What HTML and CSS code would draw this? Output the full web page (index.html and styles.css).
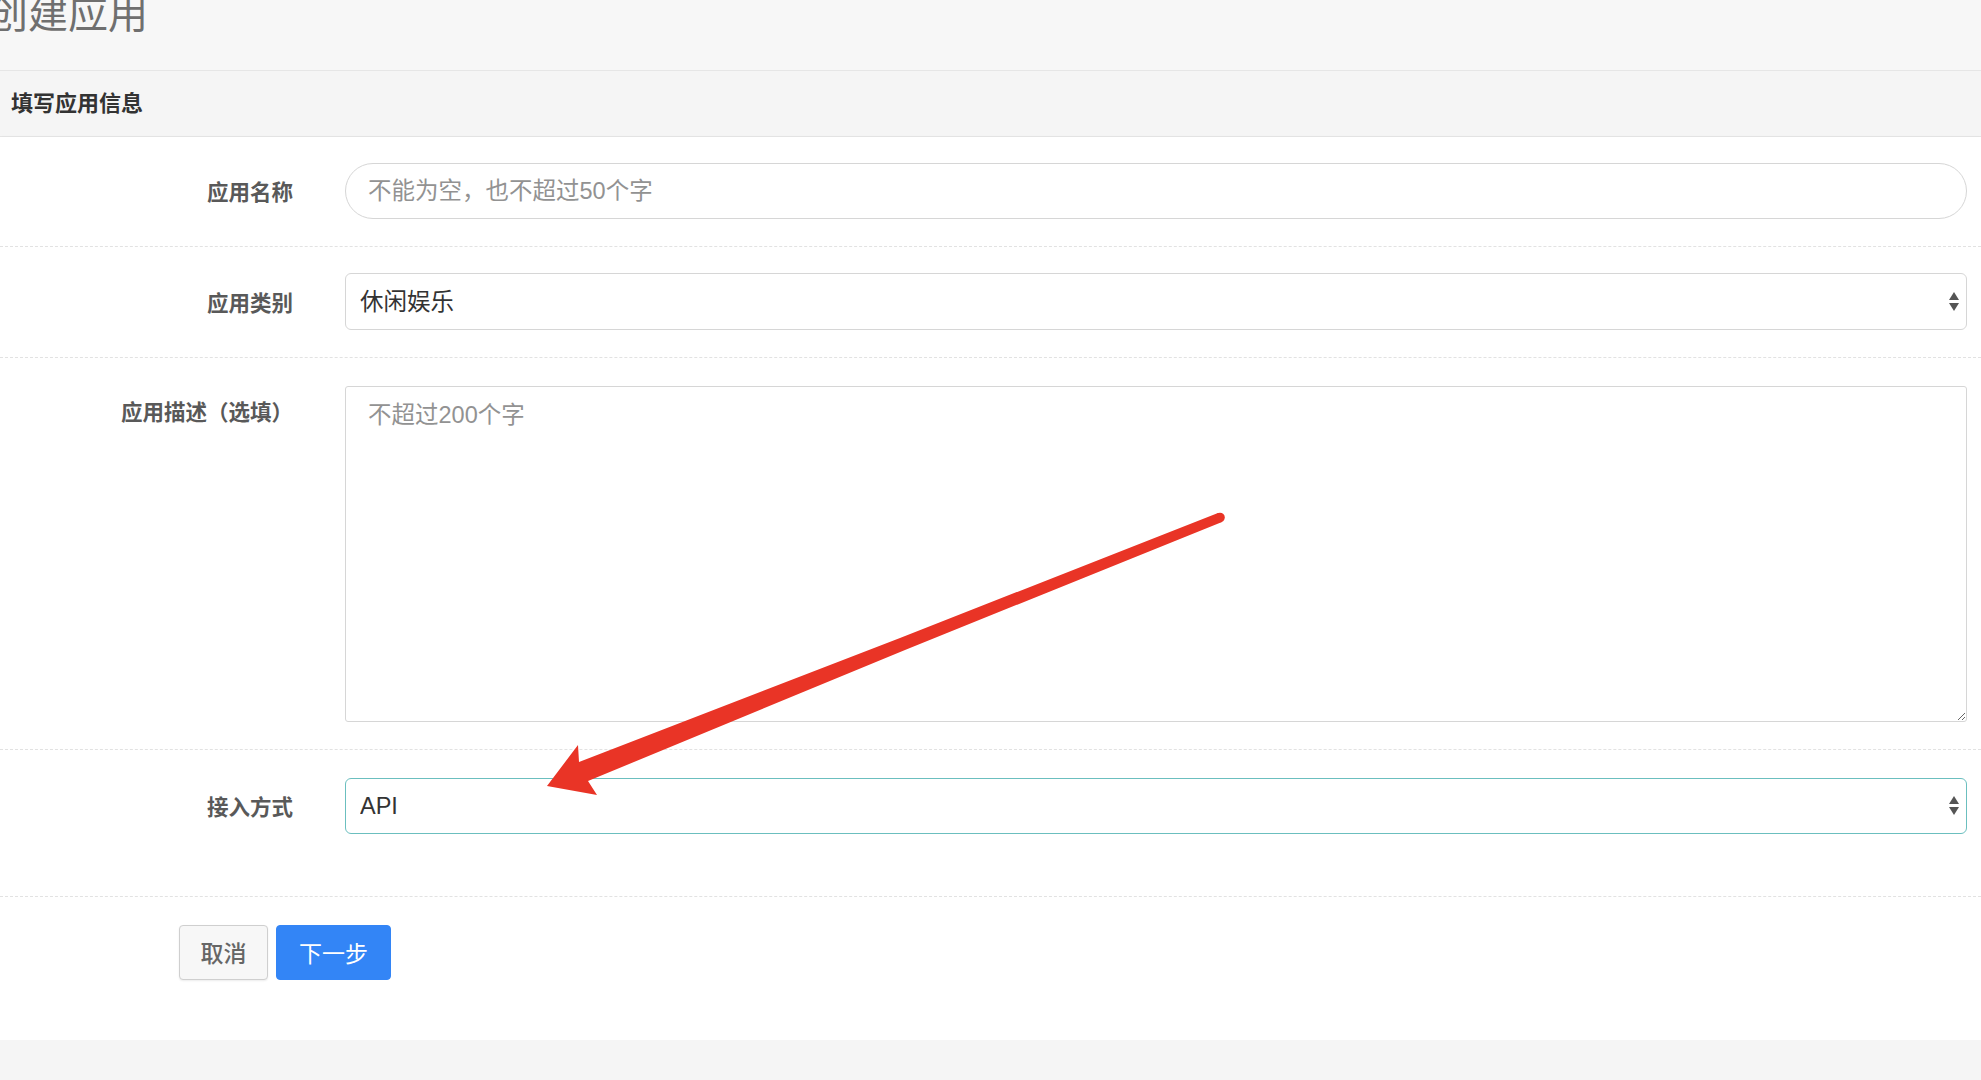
FILE: index.html
```html
<!DOCTYPE html>
<html lang="zh-CN">
<head>
<meta charset="utf-8">
<title>创建应用</title>
<link rel="stylesheet" href="styles.css">
</head>
<body>
<div class="page">
  <header class="page-head">
    <h1 class="page-title">创建应用</h1>
  </header>
  <div class="section-head">填写应用信息</div>
  <form class="form-panel">
    <div class="form-row">
      <label class="form-label">应用名称</label>
      <input class="field field-pill" type="text" placeholder="不能为空，也不超过50个字">
    </div>
    <div class="form-row">
      <label class="form-label">应用类别</label>
      <div class="select-wrap">
        <select class="field field-select">
          <option>休闲娱乐</option>
        </select>
        <svg class="select-caret" viewBox="0 0 10 20" width="10" height="20"><path d="M5 0 L10 8 L0 8 Z M0 11 L10 11 L5 19 Z" fill="#555"/></svg>
      </div>
    </div>
    <div class="form-row form-row-top">
      <label class="form-label label-top">应用描述（选填）</label>
      <textarea class="field field-area" placeholder="不超过200个字"></textarea>
    </div>
    <div class="form-row form-row-last">
      <label class="form-label">接入方式</label>
      <div class="select-wrap">
        <select class="field field-select field-focus">
          <option>API</option>
        </select>
        <svg class="select-caret" viewBox="0 0 10 20" width="10" height="20"><path d="M5 0 L10 8 L0 8 Z M0 11 L10 11 L5 19 Z" fill="#555"/></svg>
      </div>
    </div>
    <div class="form-actions">
      <button type="button" class="btn btn-default">取消</button>
      <button type="button" class="btn btn-primary">下一步</button>
    </div>
  </form>
  <div class="page-foot"></div>
</div>
<svg class="annotation" viewBox="0 0 1981 1080" width="1981" height="1080">
  <polygon fill="#e93426" points="1218,513 900,638 579,762 578,745 547,786 597,795 588,781 905,650 1222,522"/>
  <circle cx="1220" cy="517.5" r="4.8" fill="#e93426"/>
</svg>
</body>
</html>
```
FILE: styles.css
```css
* { box-sizing: border-box; }
html, body { margin: 0; padding: 0; }
body {
  background: #f6f6f6;
  font-family: "Liberation Sans", "Noto Sans CJK SC", sans-serif;
  color: #333;
  width: 1981px;
  height: 1080px;
  overflow: hidden;
  position: relative;
}
.page-head {
  height: 71px;
  border-bottom: 1px solid #e6e6e6;
  background: #f7f7f7;
  overflow: hidden;
}
.page-title {
  margin: -6px 0 0 -12px;
  font-size: 40px;
  line-height: 40px;
  font-weight: 400;
  color: #6f6f6f;
}
.section-head {
  height: 66px;
  line-height: 65px;
  padding-left: 11px;
  font-size: 22px;
  font-weight: 700;
  color: #333;
  background: #f5f5f5;
  border-bottom: 1px solid #e6e6e6;
}
.form-panel {
  background: #fff;
  margin: 0;
  box-shadow: 0 1px 3px rgba(0,0,0,0.08);
}
.form-row {
  display: grid;
  grid-template-columns: 293px 1fr;
  column-gap: 52px;
  align-items: center;
  padding: 26px 14px 27px 0;
  border-bottom: 1px dashed #e2e2e2;
}
.form-row-top { align-items: start; padding-top: 28px; }
.form-row-last { padding-top: 28px; padding-bottom: 62px; }
.form-label {
  text-align: right;
  font-size: 21.5px;
  font-weight: 700;
  color: #595959;
  line-height: 30px;
  font-family: "Noto Sans CJK SC", sans-serif;
}
.label-top { padding-top: 10px; }
.field {
  display: block;
  width: 100%;
  font-family: "Liberation Sans", "Noto Sans CJK SC", sans-serif;
  font-size: 23.5px;
  color: #333;
  background: #fff;
  border: 1px solid #d6d6d6;
  outline: none;
  margin: 0;
}
.field::placeholder { color: #929292; }
.field-pill {
  height: 56px;
  border-radius: 28px;
  padding: 0 22px;
}
.select-wrap { position: relative; }
.field-select {
  height: 57px;
  border-radius: 6px;
  padding: 0 40px 0 14px;
  appearance: none;
  -webkit-appearance: none;
}
.form-row-last .field-select { height: 56px; }
.field-focus { border-color: #6bbfbf; }
.select-caret {
  position: absolute;
  right: 8px;
  top: 50%;
  margin-top: -10px;
  pointer-events: none;
}
.field-area {
  height: 336px;
  border-radius: 3px;
  padding: 12px 22px;
  line-height: 32px;
  resize: both;
}
.form-actions {
  display: flex;
  gap: 8px;
  padding: 28px 0 60px 179px;
}
.btn {
  height: 55px;
  font-size: 23px;
  font-family: "Noto Sans CJK SC", sans-serif;
  border-radius: 4px;
  cursor: pointer;
  line-height: 1;
}
.btn-default {
  width: 89px;
  background: #f7f7f7;
  border: 1px solid #cfcfcf;
  color: #666;
  font-weight: 500;
  box-shadow: 0 1px 2px rgba(0,0,0,0.08);
}
.btn-primary {
  width: 115px;
  background: #3385f6;
  border: 1px solid #3385f6;
  color: #fff;
}
.page-foot {
  height: 40px;
  background: #f5f5f5;
}
.annotation {
  position: absolute;
  left: 0;
  top: 0;
  pointer-events: none;
}
```
